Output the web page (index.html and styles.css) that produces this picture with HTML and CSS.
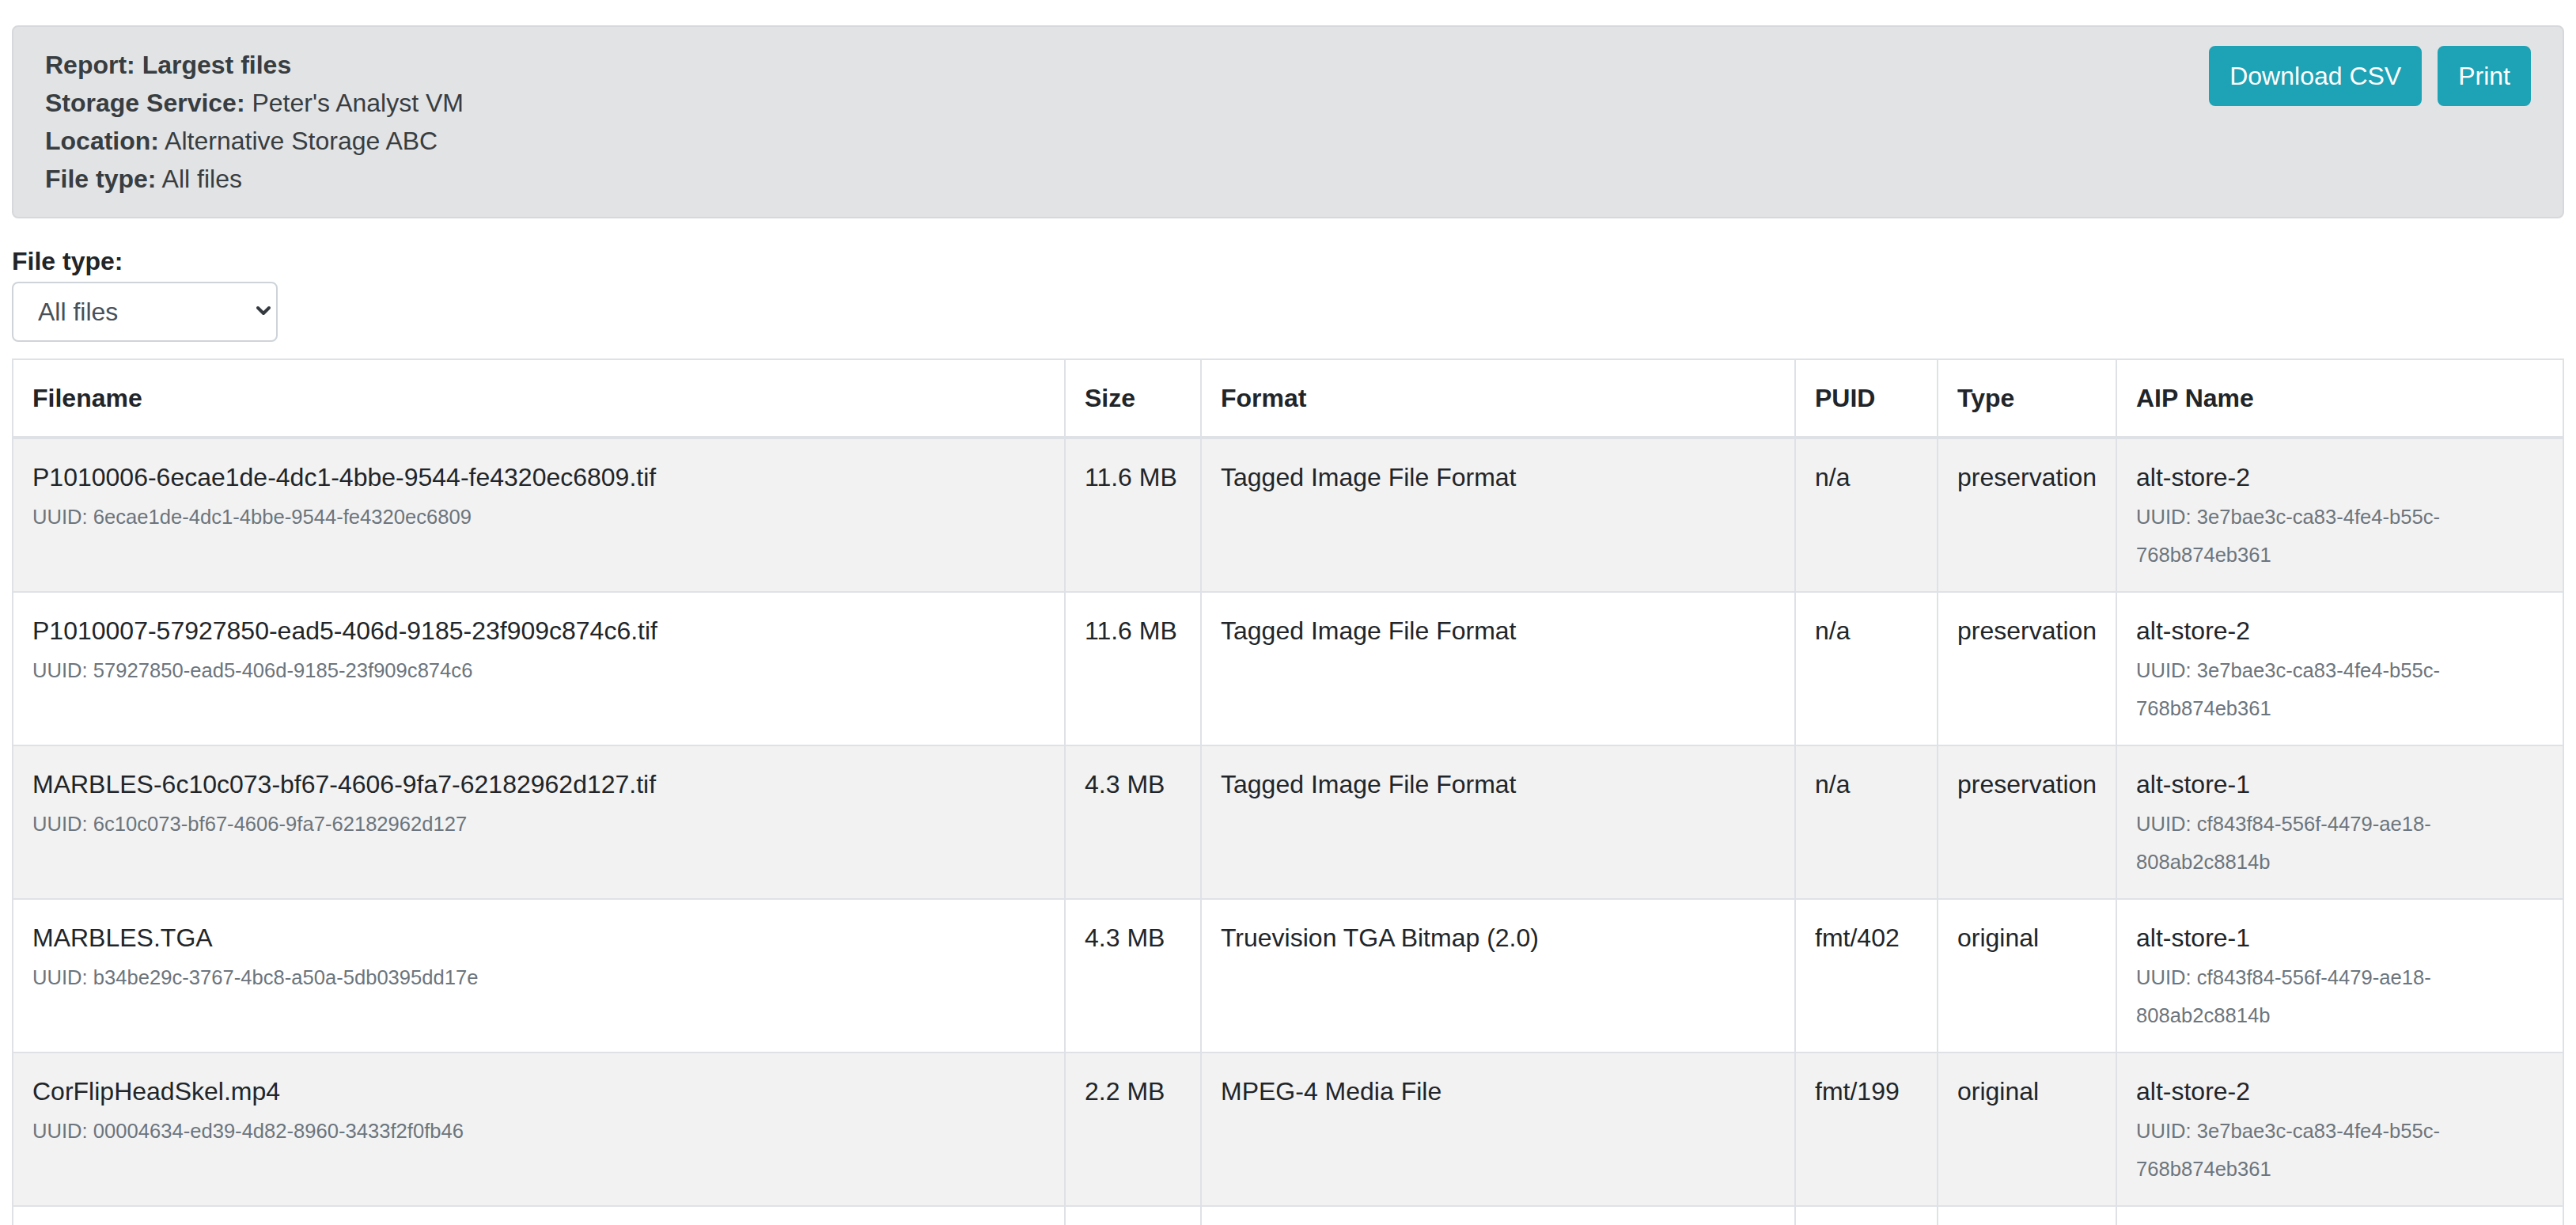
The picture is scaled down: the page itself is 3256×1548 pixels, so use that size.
FILE: index.html
```html
<!DOCTYPE html>
<html lang="en">
<head>
<meta charset="utf-8">
<title>Report: Largest files</title>
<link rel="stylesheet" href="styles.css">
</head>
<body>
<div class="page">
  <div class="report-box">
    <div class="report-info">
      <div class="strong">Report: Largest files</div>
      <div><span class="strong">Storage Service:</span> Peter's Analyst VM</div>
      <div><span class="strong">Location:</span> Alternative Storage ABC</div>
      <div><span class="strong">File type:</span> All files</div>
    </div>
    <div class="report-actions">
      <button class="btn">Download CSV</button>
      <button class="btn">Print</button>
    </div>
  </div>

  <div class="filter">
    <label class="filter-label" for="filetype">File type:</label>
    <div class="select-wrap">
      <select id="filetype" class="select">
        <option>All files</option>
        <option>Original files</option>
        <option>Preservation files</option>
      </select>
      <svg class="select-arrow" width="20" height="14" viewBox="0 0 20 14"><path d="M3 3 L10 10 L17 3" fill="none" stroke="#343a40" stroke-width="4" stroke-linecap="round" stroke-linejoin="round"/></svg>
    </div>
  </div>

  <table class="files">
    <colgroup>
      <col class="c-name">
      <col class="c-size">
      <col class="c-format">
      <col class="c-puid">
      <col class="c-type">
      <col class="c-aip">
    </colgroup>
    <thead>
      <tr><th>Filename</th><th>Size</th><th>Format</th><th>PUID</th><th>Type</th><th>AIP Name</th></tr>
    </thead>
    <tbody>
      <tr>
        <td>P1010006-6ecae1de-4dc1-4bbe-9544-fe4320ec6809.tif<div><small class="muted">UUID: 6ecae1de-4dc1-4bbe-9544-fe4320ec6809</small></div></td>
        <td>11.6 MB</td><td>Tagged Image File Format</td><td>n/a</td><td>preservation</td>
        <td>alt-store-2<div><small class="muted">UUID: 3e7bae3c-ca83-4fe4-b55c-<wbr>768b874eb361</small></div></td>
      </tr>
      <tr>
        <td>P1010007-57927850-ead5-406d-9185-23f909c874c6.tif<div><small class="muted">UUID: 57927850-ead5-406d-9185-23f909c874c6</small></div></td>
        <td>11.6 MB</td><td>Tagged Image File Format</td><td>n/a</td><td>preservation</td>
        <td>alt-store-2<div><small class="muted">UUID: 3e7bae3c-ca83-4fe4-b55c-<wbr>768b874eb361</small></div></td>
      </tr>
      <tr>
        <td>MARBLES-6c10c073-bf67-4606-9fa7-62182962d127.tif<div><small class="muted">UUID: 6c10c073-bf67-4606-9fa7-62182962d127</small></div></td>
        <td>4.3 MB</td><td>Tagged Image File Format</td><td>n/a</td><td>preservation</td>
        <td>alt-store-1<div><small class="muted">UUID: cf843f84-556f-4479-ae18-<wbr>808ab2c8814b</small></div></td>
      </tr>
      <tr>
        <td>MARBLES.TGA<div><small class="muted">UUID: b34be29c-3767-4bc8-a50a-5db0395dd17e</small></div></td>
        <td>4.3 MB</td><td>Truevision TGA Bitmap (2.0)</td><td>fmt/402</td><td>original</td>
        <td>alt-store-1<div><small class="muted">UUID: cf843f84-556f-4479-ae18-<wbr>808ab2c8814b</small></div></td>
      </tr>
      <tr>
        <td>CorFlipHeadSkel.mp4<div><small class="muted">UUID: 00004634-ed39-4d82-8960-3433f2f0fb46</small></div></td>
        <td>2.2 MB</td><td>MPEG-4 Media File</td><td>fmt/199</td><td>original</td>
        <td>alt-store-2<div><small class="muted">UUID: 3e7bae3c-ca83-4fe4-b55c-<wbr>768b874eb361</small></div></td>
      </tr>
      <tr class="row-empty">
        <td></td><td></td><td></td><td></td><td></td><td></td>
      </tr>
    </tbody>
  </table>
</div>
</body>
</html>
```

FILE: styles.css
```css
html, body {
  margin: 0;
  padding: 0;
  background: #ffffff;
}

body {
  font-family: "Liberation Sans", Arial, Helvetica, sans-serif;
  font-size: 32px;
  line-height: 1.5;
  color: #212529;
}

.page {
  padding: 32px 15px 0 15px;
}

.strong {
  font-weight: 700;
}

.report-box {
  display: flex;
  justify-content: space-between;
  align-items: flex-start;
  background: #e2e3e5;
  border: 2px solid #d6d8db;
  border-radius: 8px;
  padding: 24px 40px;
  color: #383d41;
  margin-bottom: 30px;
}

.report-actions {
  display: flex;
  gap: 20px;
}

.btn {
  font-family: inherit;
  font-size: 32px;
  line-height: 48px;
  color: #ffffff;
  background: #1ea2b5;
  border: 2px solid #1ea2b5;
  border-radius: 8px;
  padding: 12px 24px;
  cursor: pointer;
}

.filter-label {
  display: block;
  font-weight: 700;
  color: #212529;
}

.select-wrap {
  position: relative;
  width: 336px;
  height: 76px;
  margin-top: 2px;
}

.select {
  appearance: none;
  -webkit-appearance: none;
  width: 336px;
  height: 76px;
  font-family: inherit;
  font-size: 32px;
  line-height: 48px;
  color: #495057;
  background: #ffffff;
  border: 2px solid #ced4da;
  border-radius: 8px;
  padding: 0 56px 0 31px;
  margin: 0;
}

.select-arrow {
  position: absolute;
  left: 308px;
  top: 30px;
  pointer-events: none;
}

.files {
  width: 100%;
  margin-top: 21px;
  border-collapse: collapse;
  table-layout: fixed;
  border: 2px solid #dee2e6;
}

.c-name { width: 1330px; }
.c-size { width: 172px; }
.c-format { width: 751px; }
.c-puid { width: 180px; }
.c-type { width: 226px; }

.files th,
.files td {
  border: 2px solid #dee2e6;
  padding: 24px;
  text-align: left;
}

.files th {
  font-weight: 700;
  vertical-align: bottom;
  border-bottom: 4px solid #dee2e6;
}

.files td {
  vertical-align: top;
}

.files tbody tr:nth-child(odd) {
  background: #f2f2f2;
}

.row-empty td {
  height: 144px;
}

.muted {
  font-size: 80%;
  color: #6c757d;
}
```
